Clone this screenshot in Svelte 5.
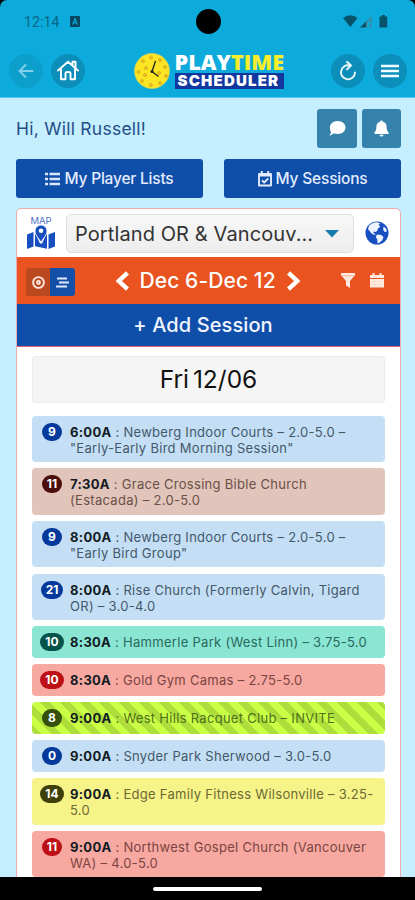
<script lang="ts">
  interface Session {
    count: number;
    time: string;
    lines: string[];
    tone: string;
  }

  const sessions: Session[] = [
    { count: 9, time: "6:00A", lines: ["Newberg Indoor Courts – 2.0-5.0 –", "\"Early-Early Bird Morning Session\""], tone: "blue" },
    { count: 11, time: "7:30A", lines: ["Grace Crossing Bible Church", "(Estacada) – 2.0-5.0"], tone: "brown" },
    { count: 9, time: "8:00A", lines: ["Newberg Indoor Courts – 2.0-5.0 –", "\"Early Bird Group\""], tone: "blue" },
    { count: 21, time: "8:00A", lines: ["Rise Church (Formerly Calvin, Tigard", "OR) – 3.0-4.0"], tone: "blue" },
    { count: 10, time: "8:30A", lines: ["Hammerle Park (West Linn) – 3.75-5.0"], tone: "teal" },
    { count: 10, time: "8:30A", lines: ["Gold Gym Camas – 2.75-5.0"], tone: "red" },
    { count: 8, time: "9:00A", lines: ["West Hills Racquet Club – INVITE"], tone: "lime" },
    { count: 0, time: "9:00A", lines: ["Snyder Park Sherwood – 3.0-5.0"], tone: "blue" },
    { count: 14, time: "9:00A", lines: ["Edge Family Fitness Wilsonville – 3.25-", "5.0"], tone: "yellow" },
    { count: 11, time: "9:00A", lines: ["Northwest Gospel Church (Vancouver", "WA) – 4.0-5.0"], tone: "red" },
  ];

  // holes drawn on the ball in the logo
  const holes = [[9, 8], [17, 4.5], [26, 7], [31, 14], [32, 23], [26, 30], [17, 32], [8, 28], [4.5, 19], [12, 15], [11, 22], [25, 20]];
</script>

<div class="phone">
  <header>
    <div class="status">
      <span class="clock">12:14</span>
      <svg class="badge-a" width="10" height="11" viewBox="0 0 10 11">
        <rect width="10" height="11" rx="1" fill="#064661" />
        <path d="M2.6 8.6 5 2.6l2.4 6M3.5 6.6h3" fill="none" stroke="#0daadc" stroke-width="1.1" />
      </svg>
      <span class="camera"></span>
      <svg class="signals" width="46" height="15" viewBox="0 0 46 15">
        <path d="M0 4Q7.300-1.600 14.600 4L7.300 13Z" fill="#075269" />
        <path d="M17 13.500 28.500 2v11.500Z" fill="#3c8aa0" />
        <path d="M17 13.500 23 7.500v6Z" fill="#075269" />
        <path d="M24.500 12.500V9l2.500-3v6.500Z" fill="#0daadc" />
        <path d="M36.500 2.500H39V1h3v1.500h2.200v11h-7.700Z" fill="#075269" />
      </svg>
    </div>
    <div class="topbar">
      <button class="round faded" aria-label="Back">
        <svg width="16" height="16" viewBox="0 0 16 16"><path d="M15.300 8H1.500M8 1.500 1.500 8 8 14.500" fill="none" stroke="#83d0ea" stroke-width="1.900" /></svg>
      </button>
      <button class="round home" aria-label="Home">
        <svg width="22" height="21" viewBox="0 0 22 21"><path d="M1 10.500 11 1.700l10 8.800M15.500 5.500V1.800h3v6.500M4 9v10.300h4.500v-6q0-1.300 2.500-1.300t2.500 1.300v6H18V9" fill="none" stroke="#fff" stroke-width="1.900" stroke-linejoin="round" stroke-linecap="round" /></svg>
      </button>
      <div class="logo">
        <svg width="36" height="36" viewBox="0 0 36 36">
          <circle cx="18" cy="18" r="17.500" fill="#fbe525" stroke="#d9d05b" stroke-width=".7" />
          {#each holes as [x, y]}
            <circle cx={x} cy={y} r="1.500" fill="#f4c21b" stroke="#cda31c" stroke-width=".7" />
          {/each}
          <path d="M21.500 8 18 18.500l6.500 5" fill="none" stroke="#242b1c" stroke-width="1.400" />
          <circle cx="18" cy="18.500" r="1.500" fill="#242b1c" />
        </svg>
        <div class="wordmark">
          <div class="play">PLAY<span>TIME</span></div>
          <div class="sched">SCHEDULER</div>
        </div>
      </div>
      <button class="round reload" aria-label="Reload">
        <svg width="18" height="20" viewBox="0 0 18 20"><path d="M10.500 4.500A7 7 0 1 0 16 11.500M8 .8l4 3.700-4 3.900" fill="none" stroke="#e8f7fc" stroke-width="1.900" stroke-linecap="round" /></svg>
      </button>
      <button class="round" aria-label="Menu">
        <svg width="18" height="14" viewBox="0 0 18 14"><path d="M0 2h18M0 7h18M0 12h18" stroke="#f2fbfe" stroke-width="2.600" /></svg>
      </button>
    </div>
  </header>

  <main>
    <div class="greeting">
      <span>Hi, Will Russell!</span>
      <button class="square" aria-label="Messages">
        <svg width="17" height="15" viewBox="0 0 17 15"><path d="M8.700 0C13.300 0 16.500 2.900 16.500 6.500S13.300 13 8.700 13c-1.400 0-2.700-.2-3.800-.7C3.500 13.500 2 14.300.2 14.400c1-1.100 1.700-2.300 1.800-3.500C1 9.700.9 8.200.9 6.500.9 2.900 4.100 0 8.700 0Z" fill="#fff" /></svg>
      </button>
      <button class="square bell" aria-label="Notifications">
        <svg width="15" height="17" viewBox="0 0 15 17"><path d="M6.500 1.500V.5h2v1c2.600.5 4.100 2.500 4.100 5.200 0 3.200.8 4.500 1.900 5.600V14H.5v-1.700c1.100-1.100 1.900-2.400 1.900-5.600 0-2.700 1.500-4.700 4.100-5.200ZM5.500 14.800h4c0 2.400-4 2.400-4 0Z" fill="#fff" /></svg>
      </button>
    </div>

    <div class="actions">
      <button>
        <svg width="15" height="14" viewBox="0 0 15 14"><path d="M0 2h3M0 7h3M0 12h3M4.500 2H15M4.500 7H15M4.500 12H15" stroke="#d9e5ff" stroke-width="2.300" /></svg>
        My Player Lists
      </button>
      <button>
        <svg width="14" height="16" viewBox="0 0 14 16"><path d="M1 3h12v11.500H1ZM1 4.500h12M3.800 0v3M10.200 0v3M4 9.300l2.200 2.200L10.300 7.400" fill="none" stroke="#e3ecff" stroke-width="1.900" stroke-linejoin="round" /></svg>
        My Sessions
      </button>
    </div>

    <section class="card">
      <div class="region">
        <div class="map">
          <span>MAP</span>
          <svg width="28" height="25" viewBox="0 0 28 25">
            <path d="M0 9.500 6.500 7v14.500L0 24ZM8 8l5 10.500h2L20 8v15.800l-12-2.500ZM21.500 9.500 28 7v14.500L21.500 24Z" fill="#174fc0" />
            <path d="M14 0a6 6 0 0 1 6 6c0 3.500-3.500 7.500-6 11-2.500-3.500-6-7.500-6-11a6 6 0 0 1 6-6Z" fill="#174fc0" stroke="#fff" stroke-width=".8" />
            <circle cx="14" cy="5.800" r="2.300" fill="#fff" />
          </svg>
        </div>
        <button class="select">
          <span>Portland OR &amp; Vancouv...</span>
          <svg width="14" height="8" viewBox="0 0 14 8"><path d="M0 0h14L7 7.500Z" fill="#167cab" /></svg>
        </button>
        <svg class="globe" width="24" height="24" viewBox="0 0 24 24">
          <circle cx="12" cy="12" r="11.500" fill="#174fc0" />
          <path d="M4 4.700Q7.500 1 12.300 1.200l3.200 1.500-2 1 1.800 2L13 7.500l-.7 2.300-1.600 1.100-2-.5-.2 1.500 2 1.300-1 .7-2.900-1.300-2.400-3L3 8.200ZM12 13.500l4.200.6 2.300 2-1 3-3.700 3.200-1.300-.4-.2-3.500-1.500-2.400ZM18.500 5.500 21 7.500l1 3-2.300.5-1.500-2Z" fill="#edf3ff" />
        </svg>
      </div>

      <div class="week">
        <div class="toggle">
          <span class="target">
            <svg width="13" height="13" viewBox="0 0 13 13"><circle cx="6.500" cy="6.500" r="5.400" fill="none" stroke="#ffe9df" stroke-width="1.900" /><circle cx="6.500" cy="6.500" r="2.400" fill="#ffe9df" /><circle cx="6.500" cy="6.500" r=".6" fill="#bc481f" /></svg>
          </span>
          <span class="rows">
            <svg width="13" height="11" viewBox="0 0 13 11"><path d="M1 1.500h10M3 5.500h10M0 9.500h11" stroke="#e0eaff" stroke-width="1.800" /></svg>
          </span>
        </div>
        <div class="range">
          <svg width="15" height="20" viewBox="0 0 15 20"><path d="M12.500 1.800 3.800 10l8.700 8.200" fill="none" stroke="#fff" stroke-width="4.400" /></svg>
          <span>Dec 6-Dec 12</span>
          <svg width="15" height="20" viewBox="0 0 15 20"><path d="m2.500 1.800 8.700 8.200-8.700 8.200" fill="none" stroke="#fff" stroke-width="4.400" /></svg>
        </div>
        <div class="tools">
          <svg width="14" height="15" viewBox="0 0 14 15"><path d="M0 0h14v2.200L9 8v7l-4-2.500V8L0 2.200Z" fill="#ffe9df" /><path d="M1 2.800h12" stroke="#eb815a" stroke-width=".6" /></svg>
          <svg width="14" height="15" viewBox="0 0 14 15"><path d="M0 2h2.500V0h2v2h5V0h2v2H14v3H0ZM0 6h14v8.500H0Z" fill="#ffe9df" /><path d="M2 8.500h10M2 11.500h10" stroke="#f7c3ac" stroke-width=".7" stroke-dasharray="1.500 1" /></svg>
        </div>
      </div>

      <button class="add">+ Add Session</button>

      <div class="day">
        <h2>Fri 12/06</h2>
        {#each sessions as session}
          <div class="session {session.tone}">
            <div class="count"><span>{session.count}</span></div>
            <p>
              <b>{session.time}</b> : {session.lines[0]}
              {#if session.lines[1]}<br />{session.lines[1]}{/if}
            </p>
          </div>
        {/each}
      </div>
    </section>
  </main>

  <footer><span></span></footer>
</div>

<style>
  :global(body) {
    background: #000;
  }

  .phone {
    width: 415px;
    height: 900px;
    overflow: hidden;
    display: flex;
    flex-direction: column;
    font-family: Inter, "Liberation Sans", sans-serif;
    background: #000;
  }

  button {
    border: 0;
    padding: 0;
    font: inherit;
    color: inherit;
    display: flex;
    align-items: center;
    justify-content: center;
  }

  svg {
    display: block;
    flex: none;
  }

  header {
    height: 98px;
    flex: none;
    box-sizing: border-box;
    background: #0daadc;
    border-bottom: 1px solid #5cc3ed;
    border-radius: 7px 7px 0 0;
  }

  .status {
    height: 43px;
    display: flex;
    align-items: center;
    padding: 0 27px 0 24px;
    position: relative;
  }

  .clock {
    font-family: Roboto, sans-serif;
    font-size: 14px;
    letter-spacing: 0.1px;
    color: #086887;
    width: 46px;
  }

  .camera {
    position: absolute;
    left: 195.500px;
    top: 9px;
    width: 25px;
    height: 25px;
    border-radius: 50%;
    background: #000;
  }

  .signals {
    margin-left: auto;
    margin-right: -1px;
  }

  .topbar {
    display: flex;
    align-items: center;
    height: 36px;
    padding: 9.500px 8px 0 9px;
  }

  .round {
    width: 34px;
    height: 34px;
    border-radius: 50%;
    background: #0b8fba;
    flex: none;
  }

  .faded {
    background: #0d9fcc;
  }

  .home {
    margin-left: 8px;
  }

  .reload {
    margin-left: auto;
    margin-right: 8px;
  }

  .logo {
    display: flex;
    align-items: center;
    margin-left: 48.500px;
    gap: 5px;
  }

  .wordmark {
    width: 110px;
    font-weight: 800;
    color: #fff;
    white-space: nowrap;
  }

  .play {
    font-family: "Open Sans", sans-serif;
    font-size: 21.700px;
    line-height: 17px;
    height: 20px;
  }

  .play span {
    color: #f8ee2a;
  }

  .sched {
    height: 16px;
    width: 109px;
    box-sizing: border-box;
    padding-left: 3px;
    background: #1238a0;
    font-size: 15px;
    font-weight: 900;
    line-height: 15px;
    letter-spacing: 1.200px;
  }

  main {
    flex: 1;
    min-height: 0;
    overflow: hidden;
    background: #c5efff;
    padding: 11px 14px 0 16px;
  }

  .greeting {
    display: flex;
    align-items: center;
    height: 39px;
    color: #234d88;
    font-size: 17.500px;
    letter-spacing: 0.250px;
  }

  .greeting span {
    margin-right: auto;
  }

  .square {
    width: 40px;
    height: 39px;
    border-radius: 3px;
    background: #3582ad;
  }

  .bell {
    width: 39px;
    margin-left: 5px;
  }

  .actions {
    display: flex;
    justify-content: space-between;
    margin-top: 11px;
  }

  .actions button {
    width: 187px;
    height: 39px;
    border-radius: 3px;
    background: #104fa9;
    color: #e3ecff;
    font-size: 15.500px;
    font-weight: 500;
    letter-spacing: -0.200px;
    gap: 4px;
  }

  .actions button:last-child {
    width: 177px;
  }

  .card {
    margin-top: 10px;
    width: 385px;
    box-sizing: border-box;
    border: 1px solid #eeaaae;
    border-radius: 5px 5px 0 0;
    background: #fff;
    overflow: hidden;
  }

  .region {
    height: 48px;
    display: flex;
    align-items: center;
    padding-left: 10px;
  }

  .map {
    width: 28px;
    color: #5371c7;
    font-size: 9.500px;
    line-height: 9px;
    text-align: center;
    padding-bottom: 1px;
  }

  .select {
    width: 288px;
    height: 39px;
    box-sizing: border-box;
    margin-left: 11px;
    margin-right: 10.500px;
    padding: 2px 14px 0 8px;
    justify-content: space-between;
    border: 1px solid #dedede;
    border-radius: 5px;
    background: linear-gradient(#f8f8f8, #ededed);
    color: #333;
    font-size: 20px;
    letter-spacing: 0.100px;
    white-space: nowrap;
  }

  .week {
    height: 47px;
    display: flex;
    align-items: center;
    background: #e8531f;
    padding: 0 16px 0 9px;
    color: #fff;
  }

  .toggle {
    display: flex;
    margin-top: 3px;
    border-radius: 3px;
    overflow: hidden;
  }

  .toggle span {
    width: 24px;
    height: 28px;
    display: flex;
    align-items: center;
    justify-content: center;
    background: #bc481f;
  }

  .toggle .rows {
    width: 25px;
    background: #1450a8;
  }

  .range {
    display: flex;
    align-items: center;
    margin-left: 39.500px;
    gap: 10px;
    font-size: 21px;
    font-weight: 500;
    letter-spacing: 0.100px;
    white-space: nowrap;
  }

  .tools {
    display: flex;
    gap: 15px;
    margin-left: auto;
  }

  .add {
    width: 100%;
    height: 43px;
    padding-right: 11px;
    border-bottom: 1px solid #e06377;
    background: #104fa9;
    color: #f2f6ff;
    font-size: 20px;
    font-weight: 500;
    letter-spacing: 0.100px;
  }

  .day {
    padding: 9px 15px 0;
  }

  h2 {
    margin: 0 0 12.500px;
    height: 47px;
    box-sizing: border-box;
    border: 1px solid #ececec;
    border-radius: 3px;
    background: #f5f5f5;
    color: #111;
    font-size: 24.500px;
    font-weight: 400;
    line-height: 44px;
    word-spacing: -3px;
    text-align: center;
  }

  .session {
    display: flex;
    box-sizing: border-box;
    height: 31.900px;
    margin-bottom: 6.100px;
    padding: 8px 0 0;
    border-radius: 4px;
    background: #c4dff5;
    color: #43586a;
    --pill: #053a9c;
  }

  .session:has(br) {
    height: 46.600px;
  }

  .count {
    width: 38px;
    flex: none;
    display: flex;
    justify-content: center;
    padding-left: 2px;
    box-sizing: border-box;
  }

  .count span {
    min-width: 20px;
    height: 18px;
    margin-top: -1px;
    padding: 0 5px;
    box-sizing: border-box;
    border-radius: 9px;
    background: var(--pill);
    color: #fff;
    font-size: 12px;
    font-weight: 700;
    line-height: 18px;
    text-align: center;
  }

  p {
    margin: 0;
    font-size: 13px;
    line-height: 16px;
    letter-spacing: 0.290px;
    white-space: nowrap;
  }

  p b {
    color: #111a22;
  }

  .brown {
    background: #e1c5ba;
    color: #6b5049;
    --pill: #4c0d0d;
  }

  .teal {
    background: #8ae5d2;
    color: #2b6a5e;
    --pill: #07524a;
  }

  .red {
    background: #f7a8a0;
    color: #7a4542;
    --pill: #bd1016;
  }

  .lime {
    background: repeating-linear-gradient(45deg, #aede3b 0 7px, #c9ff45 7px 14px);
    color: #51701d;
    --pill: #35500a;
  }

  .yellow {
    background: #f6f388;
    color: #6c6934;
    --pill: #3f4008;
  }

  footer {
    height: 23px;
    flex: none;
    display: flex;
    justify-content: center;
    align-items: center;
    background: #000;
  }

  footer span {
    width: 109px;
    height: 4px;
    border-radius: 2px;
    background: #fff;
  }
</style>
